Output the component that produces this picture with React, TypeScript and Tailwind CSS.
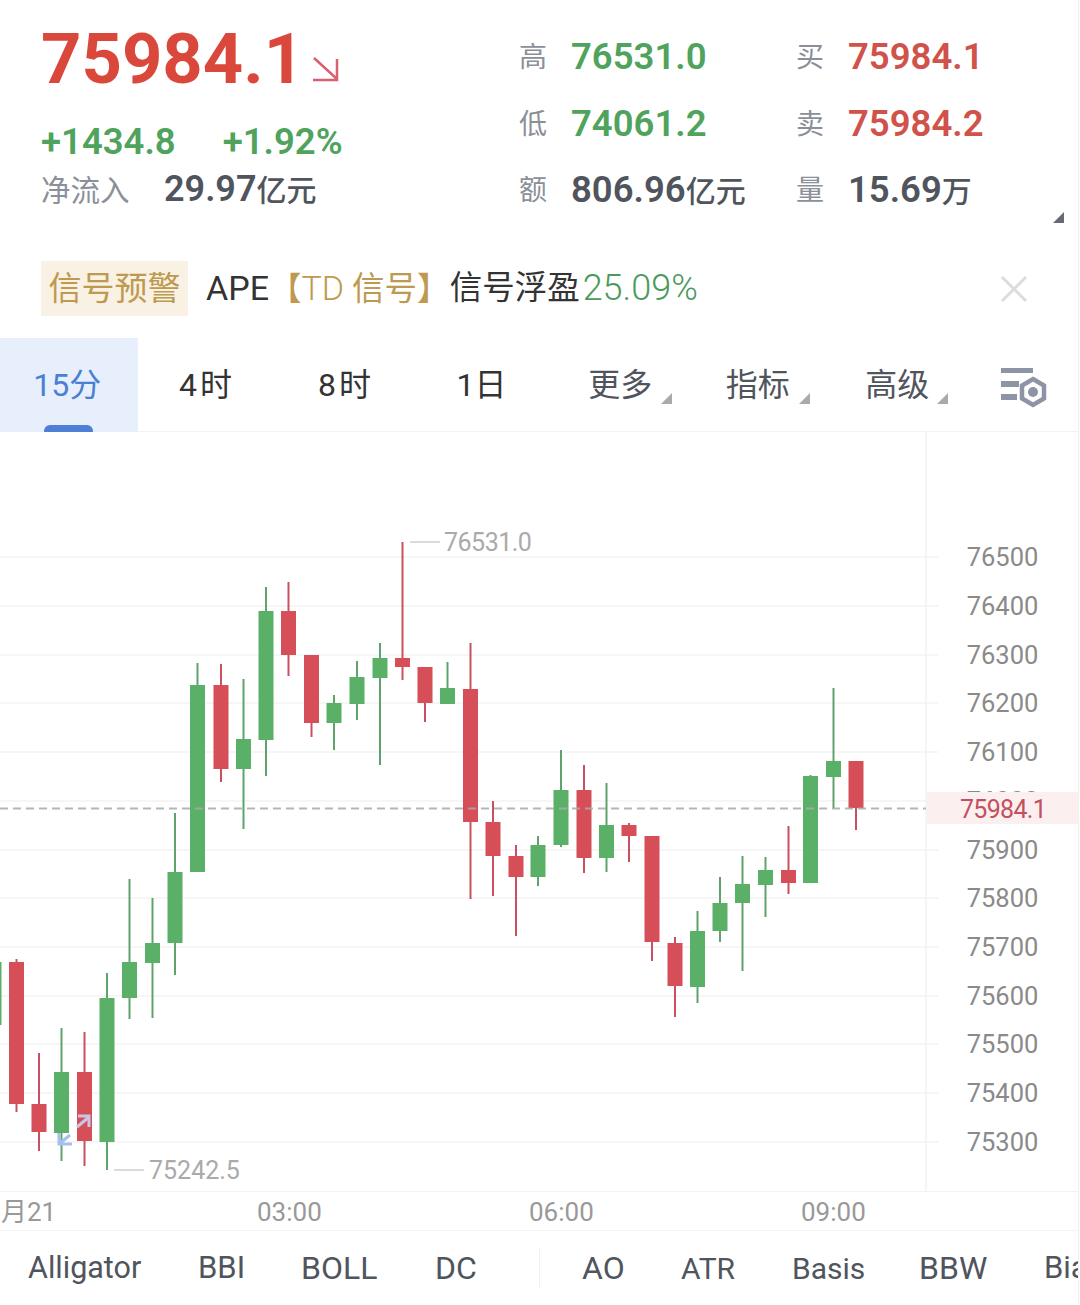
import React from 'react';

// x center, wick top, wick bottom, body top, body bottom, up (green)
const candles: [number, number, number, number, number, boolean][] = [
  [-6, 960, 1040, 962, 1025, true],
  [16.5, 959, 1112, 962, 1104, false],
  [39, 1053, 1151, 1104, 1132, false],
  [61.5, 1028, 1161, 1072, 1133, true],
  [84.5, 1032, 1166, 1072, 1141, false],
  [107, 973, 1170, 998, 1142, true],
  [129.5, 879, 1019, 962, 998, true],
  [152.5, 898, 1018, 943, 963, true],
  [175, 813, 975, 872, 943, true],
  [197.5, 663, 872, 685, 872, true],
  [221, 664, 782, 685, 769, false],
  [243.5, 679, 829, 739, 769, true],
  [266, 587, 776, 611, 740, true],
  [288.5, 582, 676, 611, 655, false],
  [311.5, 655, 737, 655, 723, false],
  [334, 695, 750, 703, 723, true],
  [357, 661, 720, 677, 704, true],
  [380, 643, 765, 658, 678, true],
  [402.5, 542, 680, 658, 667, false],
  [425, 667, 722, 667, 703, false],
  [447.5, 662, 704, 688, 704, true],
  [470.5, 643, 899, 689, 822, false],
  [493, 801, 896, 822, 856, false],
  [516, 845, 936, 856, 877, false],
  [538, 836, 886, 845, 877, true],
  [561, 750, 847, 790, 845, true],
  [584, 765, 873, 790, 858, false],
  [606.5, 783, 872, 825, 858, true],
  [629, 823, 862, 825, 836, false],
  [652, 836, 961, 836, 942, false],
  [675, 937, 1017, 943, 986, false],
  [697.5, 911, 1003, 931, 987, true],
  [720, 877, 942, 903, 931, true],
  [742.5, 856, 971, 884, 903, true],
  [765.5, 857, 917, 870, 885, true],
  [788.5, 826, 894, 870, 883, false],
  [810.5, 775, 883, 776, 883, true],
  [833.5, 688, 808, 761, 777, true],
  [856, 761, 830, 761, 808, false],
];

const priceLevels: [string, number][] = [
  ['76500', 557],
  ['76400', 606],
  ['76300', 655],
  ['76200', 703],
  ['76100', 752],
  ['76000', 801],
  ['75900', 850],
  ['75800', 898],
  ['75700', 947],
  ['75600', 996],
  ['75500', 1044],
  ['75400', 1093],
  ['75300', 1142],
];

const tabs = [
  { label: '15分', nudge: 'pr-[3px]' },
  { label: '4时', nudge: 'pl-[1px] tracking-[3px]' },
  { label: '8时', nudge: 'pl-[4px] tracking-[3px]' },
  { label: '1日', nudge: '' },
  { label: '更多', nudge: 'pl-[2px]' },
  { label: '指标', nudge: 'pl-[2px]' },
  { label: '高级', nudge: 'pl-[6px]' },
];

const leftIndicators = [
  { name: 'Alligator', cell: 'w-[170px] text-[30.5px]' },
  { name: 'BBI', cell: 'w-[103px] text-[31px]' },
  { name: 'BOLL', cell: 'w-[134px] text-[32px]' },
  { name: 'DC', cell: 'w-[104px] text-[32px]' },
];
const rightIndicators = [
  { name: 'AO', cell: 'w-[99px] text-[32px]' },
  { name: 'ATR', cell: 'w-[111px] text-[30px]' },
  { name: 'Basis', cell: 'w-[127px] text-[30px]' },
  { name: 'BBW', cell: 'w-[125px] text-[32px]' },
  { name: 'Bias', cell: 'text-[31px]' },
];

function CornerMark({ className }: { className: string }) {
  return (
    <svg className={className} width="11" height="11" viewBox="0 0 11 11">
      <path d="M11 0V11H0Z" fill="currentColor" />
    </svg>
  );
}

function Stat({ label, value, unit, color }: { label: string; value: string; unit?: string; color: string }) {
  return (
    <div className="flex h-[66.5px] items-baseline">
      <span className="w-[52px] -translate-y-[2px] text-[28px] text-[#8b9098]">{label}</span>
      <span className={`text-[36.5px] font-semibold ${color}`}>{value}</span>
      {unit && <span className={`text-[30px] font-medium ${color}`}>{unit}</span>}
    </div>
  );
}

function PriceChart() {
  return (
    <svg width="1078" height="759" viewBox="0 432 1078 759" className="block">
      {priceLevels.map(([label, y]) => (
        <g key={label}>
          <line x1="0" x2="938" y1={y} y2={y} stroke="#f3f3f3" strokeWidth="1.5" />
          <text x="1002.5" y={y + 8.5} textAnchor="middle" fontSize="25.5" fill="#8a8a8a">{label}</text>
        </g>
      ))}
      <line x1="926" x2="926" y1="432" y2="1191" stroke="#f2f2f2" strokeWidth="1.5" />
      {candles.map(([x, top, bottom, bodyTop, bodyBottom, up]) => (
        <g key={x}>
          <line x1={x} x2={x} y1={top} y2={bottom} stroke={up ? '#5fa36c' : '#c9505f'} strokeWidth="2" />
          <rect x={x - 7.5} y={bodyTop} width="15" height={bodyBottom - bodyTop} fill={up ? '#59b066' : '#d64f58'} />
        </g>
      ))}
      <line x1="0" x2="926" y1="808.5" y2="808.5" stroke="#a9a9ad" strokeWidth="2" strokeDasharray="8 5" opacity="0.85" />
      <rect x="927" y="792" width="151" height="32" fill="#fbefef" />
      <text x="1003" y="818" textAnchor="middle" fontSize="25" letterSpacing="-0.7" fill="#c4505f">75984.1</text>
      <line x1="410" x2="440" y1="542" y2="542" stroke="#cfcfcf" strokeWidth="1.5" />
      <text x="444" y="551" fontSize="25" letterSpacing="-0.5" fill="#aaaaaa">76531.0</text>
      <line x1="114" x2="144" y1="1170" y2="1170" stroke="#cfcfcf" strokeWidth="1.5" />
      <text x="149" y="1179" fontSize="25" fill="#aaaaaa">75242.5</text>
      {/* expand handle over the candles */}
      <g fill="none" strokeWidth="3">
        <path d="M59 1133v11h13M59 1144l11-9" stroke="#a3c0ee" />
        <path d="M77 1127l12-10M78 1116h11v11" stroke="#c6c6e6" />
      </g>
    </svg>
  );
}

export default function App() {
  return (
    <div className="relative h-[1305px] w-[1079px] overflow-hidden border-r border-[#f2f2f2] bg-white font-[Roboto,'Noto_Sans_CJK_SC',sans-serif]">
      <div className="flex h-[260px] pt-[17px]">
        <div className="w-[519px] pl-[41px]">
          <div className="flex items-end text-[#d9483b]">
            <span className="text-[70.5px] font-bold leading-[84px]">75984.1</span>
            <svg className="mb-[19px] ml-[8px]" width="27" height="26" viewBox="0 0 27 26" fill="none" stroke="#d9606f" strokeWidth="2.5">
              <path d="M2 2l23 21M25 3v21H1" />
            </svg>
          </div>
          <div className="mt-[19px] flex gap-[47px] text-[36.5px] font-semibold leading-[44px] text-[#4fa35c]">
            <span>+1434.8</span>
            <span>+1.92%</span>
          </div>
          <div className="mt-[3px] flex items-baseline leading-[44px] text-[#50555d]">
            <span className="w-[123px] text-[29.5px] text-[#8b9098]">净流入</span>
            <span className="text-[36px] font-semibold">29.97</span>
            <span className="text-[30px] font-medium">亿元</span>
          </div>
        </div>
        <div className="grid grid-cols-[277px_auto] content-start pt-[13px]">
          <Stat label="高" value="76531.0" color="text-[#4fa35c]" />
          <Stat label="买" value="75984.1" color="text-[#d0524a]" />
          <Stat label="低" value="74061.2" color="text-[#4fa35c]" />
          <Stat label="卖" value="75984.2" color="text-[#d0524a]" />
          <Stat label="额" value="806.96" unit="亿元" color="text-[#50555d]" />
          <Stat label="量" value="15.69" unit="万" color="text-[#50555d]" />
        </div>
        <CornerMark className="absolute left-[1053px] top-[212px] text-[#666b73]" />
      </div>

      <div className="flex h-[78px] items-start pl-[41px] pt-[1px] text-[32.5px] leading-[55px] text-[#333]">
        <span className="mr-[18px] h-[55px] w-[147px] bg-[#f8f1e4] text-center text-[33px] text-[#bd9a50]">信号预警</span>
        <span className="text-[34px]">APE</span>
        <span className="text-[#bd9a50]">【<span className="text-[34px] font-light">TD</span> 信号】</span>
        <span>信号浮盈</span>
        <span className="ml-[3px] text-[36px] font-light text-[#4a9a5c]">25.09%</span>
        <svg className="absolute left-[1000px] top-[275px]" width="28" height="28" viewBox="0 0 28 28" stroke="#dcdcdc" strokeWidth="3">
          <path d="M2 2l24 24M26 2L2 26" />
        </svg>
      </div>

      <div className="flex h-[94px] border-b border-[#f3f3f3]">
        {tabs.map((tab, i) => (
          <div
            key={tab.label}
            className={`relative flex h-[94px] w-[137.6px] items-center justify-center text-[32px] ${tab.nudge} ${
              i === 0 ? 'bg-[#e6effb] text-[#4a7fd4]' : i < 4 ? 'text-[#333]' : 'text-[#50555d]'
            }`}
          >
            {tab.label}
            {i === 0 && <div className="absolute bottom-0 left-[44px] h-[7px] w-[49px] rounded-t-[6px] bg-[#4e7fd6]" />}
            {i > 3 && <CornerMark className="absolute left-[111px] top-[55px] text-[#aaaaaa]" />}
          </div>
        ))}
        <svg className="ml-[37px] mt-[28px]" width="48" height="42" viewBox="0 0 48 42">
          <path d="M1 2h32v5H1zM1 15h18v6H1zM1 28h16v6H1z" fill="#8c94a5" />
          <path d="M33 13l11 6.5v13L33 39l-11-6.5v-13Z" fill="none" stroke="#8c94a5" strokeWidth="4.5" />
          <circle cx="33" cy="26" r="5" fill="#8c94a5" />
        </svg>
      </div>

      <PriceChart />

      <div className="relative h-[40px] border-y border-[#f3f3f3] text-[26px] leading-[40px] text-[#999]">
        <span className="absolute left-[1px]">月21</span>
        <span className="absolute left-[257px]">03:00</span>
        <span className="absolute left-[529px]">06:00</span>
        <span className="absolute left-[801px]">09:00</span>
      </div>

      <div className="flex h-[74px] items-center overflow-hidden whitespace-nowrap pl-[28px] text-[#50555d]">
        {leftIndicators.map((item) => (
          <span key={item.name} className={`shrink-0 ${item.cell}`}>{item.name}</span>
        ))}
        <div className="mr-[42px] h-[38px] w-px shrink-0 bg-[#f0f0f0]" />
        {rightIndicators.map((item) => (
          <span key={item.name} className={`shrink-0 ${item.cell}`}>{item.name}</span>
        ))}
      </div>
    </div>
  );
}
